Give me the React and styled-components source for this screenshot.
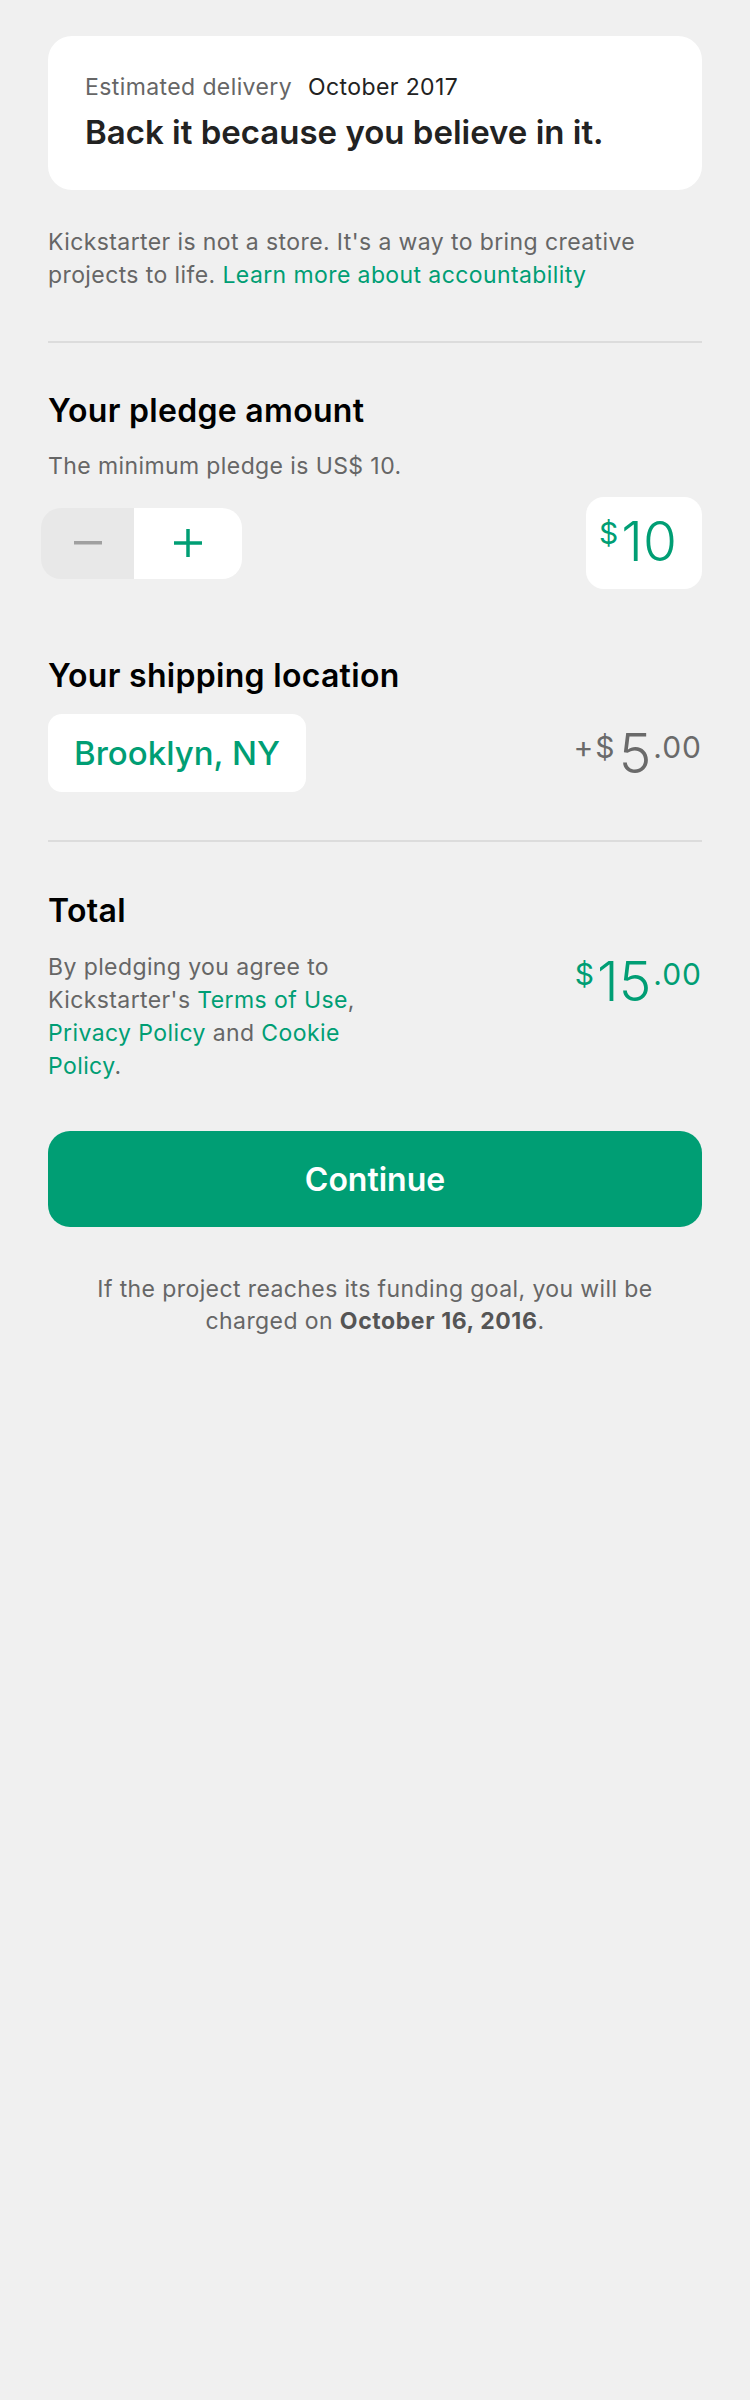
import React from "react";
import styled, { createGlobalStyle } from "styled-components";

const GREEN = "#009e74";
const GREY = "#666666";

const GlobalStyle = createGlobalStyle`
  html, body { margin: 0; padding: 0; background: #f0f0f0; }
  body { font-family: Inter, "Noto Sans", sans-serif; -webkit-font-smoothing: antialiased; }
  * { box-sizing: border-box; }
`;

const Page = styled.main`
  width: 750px;
  min-height: 2400px;
  padding: 36px 48px 0;
  display: flex;
  flex-direction: column;
`;

const Card = styled.section`
  background: #fff;
  border-radius: 24px;
  height: 154px;
  padding: 37px 37px 0;
  display: flex;
  flex-direction: column;
  gap: 11px;
`;

const DeliveryRow = styled.div`
  display: flex;
  gap: 16px;
  font-size: 23px;
  line-height: 28px;
  letter-spacing: 0.4px;
`;

const DeliveryLabel = styled.span`
  color: ${GREY};
`;

const DeliveryDate = styled.span`
  color: #222;
`;

const Headline = styled.h1`
  margin: 0;
  font-size: 33px;
  line-height: 40px;
  font-weight: 600;
  color: #222;
  letter-spacing: 0;
`;

const Body = styled.p`
  margin: ${(p) => p.$mt || 0}px 0 0;
  font-size: 23px;
  line-height: ${(p) => p.$lh || 33}px;
  color: ${GREY};
  letter-spacing: 0.4px;
  max-width: ${(p) => (p.$narrow ? "360px" : "none")};
  text-align: ${(p) => (p.$center ? "center" : "left")};
  padding: ${(p) => (p.$center ? "0 40px" : "0")};
`;

const Link = styled.a`
  color: ${GREEN};
  text-decoration: none;
`;

const Strong = styled.strong`
  font-weight: 650;
  color: #555;
  letter-spacing: 0.6px;
`;

const Divider = styled.hr`
  border: none;
  height: 2px;
  background: #dcdcdc;
  margin: ${(p) => p.$mt}px 0 0;
  width: 100%;
`;

const SectionTitle = styled.h2`
  margin: ${(p) => p.$mt}px 0 0;
  font-size: 32px;
  line-height: 38px;
  font-weight: 600;
  color: #000;
  letter-spacing: 0.3px;
`;

const Row = styled.div`
  display: flex;
  justify-content: space-between;
  align-items: ${(p) => p.$align || "center"};
  margin-top: ${(p) => p.$mt}px;
`;

const Stepper = styled.div`
  display: flex;
  width: 201px;
  height: 71px;
  margin-left: -7px;
  border-radius: 20px;
  overflow: hidden;
`;

const StepButton = styled.button`
  border: none;
  padding: 0;
  margin: 0;
  width: ${(p) => p.$w}px;
  height: 100%;
  background: ${(p) => (p.$active ? "#fff" : "#e8e8e8")};
  display: flex;
  align-items: center;
  justify-content: center;
  cursor: pointer;
`;

const AmountBox = styled.div`
  background: #fff;
  border-radius: 18px;
  width: 116px;
  height: 92px;
  display: flex;
  align-items: flex-start;
  justify-content: flex-start;
  padding: 17px 0 0 13px;
  color: ${GREEN};
`;

const Price = styled.div`
  display: flex;
  align-items: flex-start;
  height: 55px;
  color: ${(p) => p.$color};
  font-weight: 400;
  margin-top: ${(p) => p.$mt || 0}px;
`;

const Small = styled.span`
  font-size: 30px;
  line-height: 30px;
  margin-top: ${(p) => p.$mt || 0}px;
  letter-spacing: ${(p) => p.$ls || 0}px;
`;

const Big = styled.span`
  font-size: 55px;
  line-height: 55px;
  font-weight: 300;
  letter-spacing: ${(p) => p.$ls || 0}px;
  margin: 0 ${(p) => p.$mr || 0}px 0 ${(p) => p.$ml || 0}px;
`;

const LocationButton = styled.button`
  border: none;
  background: #fff;
  border-radius: 14px;
  height: 78px;
  width: 258px;
  padding: 0;
  font-family: inherit;
  font-size: 33px;
  font-weight: 500;
  color: ${GREEN};
  letter-spacing: 0;
  cursor: pointer;
`;

const PrimaryButton = styled.button`
  margin-top: 48px;
  height: 96px;
  width: 100%;
  border: none;
  border-radius: 22px;
  background: ${GREEN};
  color: #fff;
  font-family: inherit;
  font-size: 32px;
  font-weight: 600;
  letter-spacing: 0;
  cursor: pointer;
`;

const MinusIcon = () => (
  <svg width="28" height="4" viewBox="0 0 28 4">
    <rect x="0" y="0" width="28" height="3.5" fill="#a0a0a0" />
  </svg>
);

const PlusIcon = () => (
  <svg width="28" height="28" viewBox="0 0 28 28">
    <rect x="0" y="12.25" width="28" height="3.5" fill={GREEN} />
    <rect x="12.25" y="0" width="3.5" height="28" fill={GREEN} />
  </svg>
);

export default function App() {
  return (
    <>
      <GlobalStyle />
      <Page>
        <Card>
          <DeliveryRow>
            <DeliveryLabel>Estimated delivery</DeliveryLabel>
            <DeliveryDate>October 2017</DeliveryDate>
          </DeliveryRow>
          <Headline>Back it because you believe in it.</Headline>
        </Card>

        <Body $mt={36}>
          Kickstarter is not a store. It's a way to bring creative projects to life.{" "}
          <Link href="#">Learn more about accountability</Link>
        </Body>

        <Divider $mt={49} />

        <SectionTitle $mt={49}>Your pledge amount</SectionTitle>
        <Body $mt={21} $lh={30}>The minimum pledge is US$ 10.</Body>
        <Row $mt={16}>
          <Stepper>
            <StepButton $w={93} aria-label="decrease">
              <MinusIcon />
            </StepButton>
            <StepButton $w={108} $active aria-label="increase">
              <PlusIcon />
            </StepButton>
          </Stepper>
          <AmountBox>
            <Small $mt={4}>$</Small>
            <Big $ml={3}>10</Big>
          </AmountBox>
        </Row>

        <SectionTitle $mt={67.5}>Your shipping location</SectionTitle>
        <Row $mt={19.5}>
          <LocationButton>Brooklyn, NY</LocationButton>
          <Price $color="#6a6a6a">
            <Small $mt={6} $ls={2}>+$</Small>
            <Big $ml={2} $mr={2}>5</Big>
            <Small $mt={6} $ls={1}>.00</Small>
          </Price>
        </Row>

        <Divider $mt={48} />

        <SectionTitle $mt={49.5}>Total</SectionTitle>
        <Row $mt={21.5} $align="flex-start">
          <Body $narrow>
            By pledging you agree to Kickstarter's <Link href="#">Terms of Use</Link>,{" "}
            <Link href="#">Privacy Policy</Link> and <Link href="#">Cookie Policy</Link>.
          </Body>
          <Price $color={GREEN} $mt={3}>
            <Small $mt={5}>$</Small>
            <Big $ml={3} $mr={2}>15</Big>
            <Small $mt={5} $ls={1}>.00</Small>
          </Price>
        </Row>

        <PrimaryButton>Continue</PrimaryButton>

        <Body $mt={46} $center $lh={32}>
          If the project reaches its funding goal, you will be charged on{" "}
          <Strong>October 16, 2016</Strong>.
        </Body>
      </Page>
    </>
  );
}
